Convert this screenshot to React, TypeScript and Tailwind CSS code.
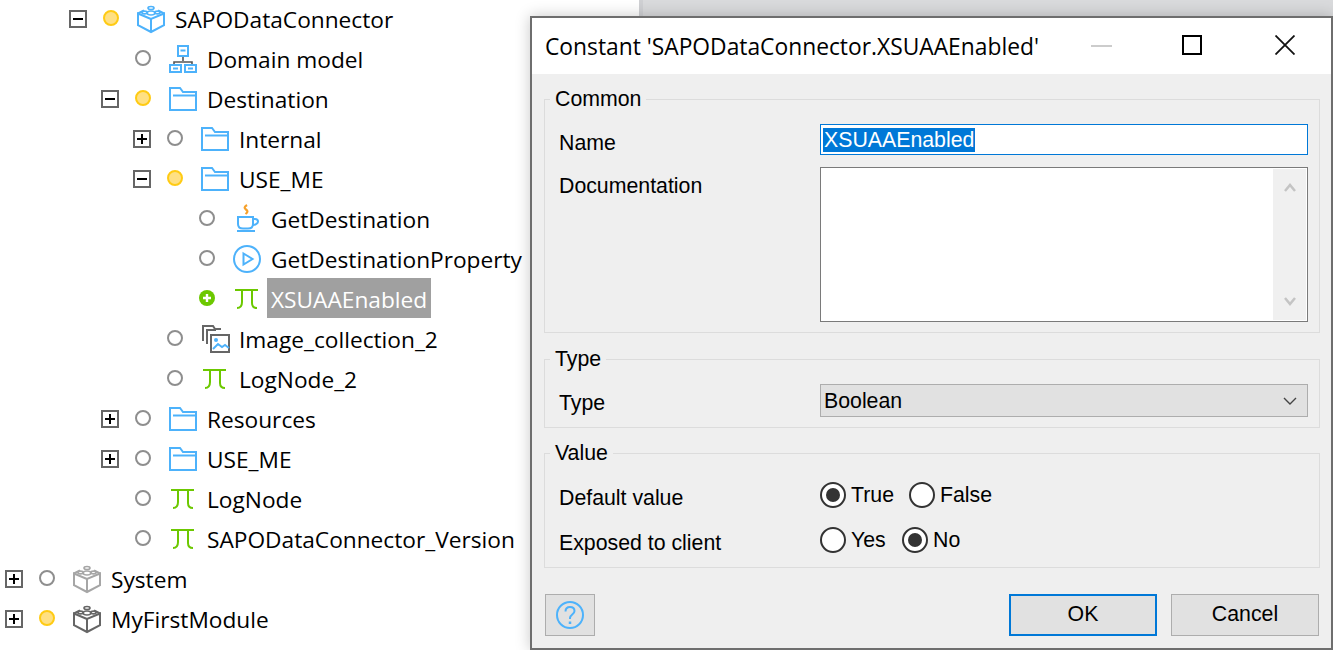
import React from 'react';

type DotKind = 'empty' | 'yellow' | 'added';
type IconKind = 'module' | 'moduleGray' | 'moduleDark' | 'domain' | 'folder' | 'java' | 'flow' | 'pi' | 'images';

interface TreeRow {
  level: number;
  toggle?: '+' | '-';
  dot: DotKind;
  icon: IconKind;
  label: string;
  selected?: boolean;
}

const rows: TreeRow[] = [
  { level: 2, toggle: '-', dot: 'yellow', icon: 'module', label: 'SAPODataConnector' },
  { level: 3, dot: 'empty', icon: 'domain', label: 'Domain model' },
  { level: 3, toggle: '-', dot: 'yellow', icon: 'folder', label: 'Destination' },
  { level: 4, toggle: '+', dot: 'empty', icon: 'folder', label: 'Internal' },
  { level: 4, toggle: '-', dot: 'yellow', icon: 'folder', label: 'USE_ME' },
  { level: 5, dot: 'empty', icon: 'java', label: 'GetDestination' },
  { level: 5, dot: 'empty', icon: 'flow', label: 'GetDestinationProperty' },
  { level: 5, dot: 'added', icon: 'pi', label: 'XSUAAEnabled', selected: true },
  { level: 4, dot: 'empty', icon: 'images', label: 'Image_collection_2' },
  { level: 4, dot: 'empty', icon: 'pi', label: 'LogNode_2' },
  { level: 3, toggle: '+', dot: 'empty', icon: 'folder', label: 'Resources' },
  { level: 3, toggle: '+', dot: 'empty', icon: 'folder', label: 'USE_ME' },
  { level: 3, dot: 'empty', icon: 'pi', label: 'LogNode' },
  { level: 3, dot: 'empty', icon: 'pi', label: 'SAPODataConnector_Version' },
  { level: 0, toggle: '+', dot: 'empty', icon: 'moduleGray', label: 'System' },
  { level: 0, toggle: '+', dot: 'yellow', icon: 'moduleDark', label: 'MyFirstModule' },
];

const Toggle = ({ kind }: { kind?: '+' | '-' }) => {
  if (!kind) return <span className="w-[18px] h-[18px] shrink-0" />;
  return (
    <svg width="18" height="18" viewBox="0 0 18 18" className="shrink-0 -mt-[3px]">
      <rect x="1" y="1" width="16" height="16" fill="#fff" stroke="#666" strokeWidth="2" />
      <path d={kind === '+' ? 'M4 9h10M9 4v10' : 'M4 9h10'} stroke="#000" strokeWidth="2" />
    </svg>
  );
};

const Dot = ({ kind }: { kind: DotKind }) => {
  if (kind === 'added') {
    return (
      <svg width="16" height="16" viewBox="0 0 16 16" className="shrink-0 ml-[16px] -mt-[4px]">
        <circle cx="8" cy="8" r="8" fill="#6cc800" />
        <path d="M4 8h8M8 4v8" stroke="#fff" strokeWidth="2.4" />
      </svg>
    );
  }
  const yellow = kind === 'yellow';
  return (
    <svg width="16" height="16" viewBox="0 0 16 16" className="shrink-0 ml-[16px] -mt-[4px]">
      <circle cx="8" cy="8" r="7" fill={yellow ? '#ffe083' : '#fff'} stroke={yellow ? '#ffcb14' : '#8e8e8e'} strokeWidth="2" />
    </svg>
  );
};

const ModuleIcon = ({ color }: { color: string }) => (
  <svg width="30" height="30" viewBox="0 0 30 30" fill="none" stroke={color} strokeWidth="1.6" className="shrink-0 -mt-[3px] mr-[2px]">
    <path d="M15 15 2 9.500v11.700L15 28l13-6.800V9.500z" strokeWidth="2" />
    <path d="M15 15v13" strokeWidth="2" />
    <path d="M2 9.500 8 6.500M22 6.500l6 3" strokeWidth="2" />
    <ellipse cx="15" cy="9" rx="3.800" ry="2" />
    <ellipse cx="8.500" cy="8.500" rx="2.600" ry="1.400" />
    <ellipse cx="21.500" cy="8.500" rx="2.600" ry="1.400" />
    <ellipse cx="15" cy="4" rx="3" ry="1.500" />
  </svg>
);

const TreeIcon = ({ kind }: { kind: IconKind }) => {
  switch (kind) {
    case 'module':
      return <ModuleIcon color="#4db2fb" />;
    case 'moduleGray':
      return <ModuleIcon color="#a6a6a6" />;
    case 'moduleDark':
      return <ModuleIcon color="#666" />;
    case 'domain':
      return (
        <svg width="30" height="30" viewBox="0 0 30 30" fill="none" className="shrink-0 -mt-[2px] mr-[2px]">
          <path d="M15 12v5M6 22v-4h18v4" stroke="#555" strokeWidth="1.600" />
          <path d="M10 2h10v10H10zM2 21h11v7H2zM17 21h11v7H17z" stroke="#4db2fb" strokeWidth="2" />
          <path d="M12.500 6.500h5M5 24.500h5M20 24.500h5" stroke="#4db2fb" strokeWidth="2" />
        </svg>
      );
    case 'folder':
      return (
        <svg width="30" height="26" viewBox="0 0 30 26" fill="none" stroke="#4db2fb" strokeWidth="2" className="shrink-0 -mt-[3px] mr-[2px]">
          <path d="M2 2h10l3 4h13v18H2z" />
          <path d="M5 9.500h23" />
        </svg>
      );
    case 'java':
      return (
        <svg width="30" height="32" viewBox="0 0 30 32" fill="none" className="shrink-0 -mt-[3px]">
          <path d="M14 2C11 4 11 5 13 6.500S15 9 12.500 11" stroke="#f6a12a" strokeWidth="2.200" />
          <path d="M5 14h15v7c0 3-2 4.500-5 4.500h-5c-3 0-5-1.500-5-4.500z" stroke="#4db2fb" strokeWidth="2" />
          <path d="M20 16h2c2 0 3 1 3 2.500s-2 3.500-5 3.500" stroke="#4db2fb" strokeWidth="2" />
          <path d="M4 28h18" stroke="#4db2fb" strokeWidth="2" />
        </svg>
      );
    case 'flow':
      return (
        <svg width="30" height="30" viewBox="0 0 30 30" fill="none" stroke="#4db2fb" strokeWidth="2" className="shrink-0 -mt-[3px] mr-[2px]">
          <circle cx="15" cy="15" r="13" />
          <path d="M11.500 9.500 20.500 15l-9 5.500z" />
        </svg>
      );
    case 'pi':
      return (
        <svg width="26" height="24" viewBox="0 0 26 24" fill="none" stroke="#6cc800" strokeWidth="2" className="shrink-0 -mt-[2px] mr-[3px]">
          <path d="M1 3h23M8 3v12c0 4-2 6-5 6M18 3v13c0 3 1.500 5 5 5" />
        </svg>
      );
    case 'images':
      return (
        <svg width="30" height="30" viewBox="0 0 30 30" fill="none" className="shrink-0 -mt-[3px]">
          <path d="M2 17V2h10l2 3h6M6 20V6h9" stroke="#666" strokeWidth="2" />
          <path d="M10 11h18v17H10z" stroke="#666" strokeWidth="2" />
          <path d="M12 25l5-5 4 3 3-2 4 3" stroke="#4db2fb" strokeWidth="2" />
          <circle cx="15" cy="16" r="2" fill="#4db2fb" />
        </svg>
      );
  }
};

const Tree = () => (
  <div className="w-[639px] shrink-0 bg-white">
    {rows.map((row, i) => (
      <div
        key={i}
        className="h-10 flex items-center pl-[5px]"
        style={{ marginLeft: row.level * 32 }}
      >
        <Toggle kind={row.toggle} />
        <Dot kind={row.dot} />
        <span className="w-[30px] h-[30px] ml-[18px] shrink-0 flex items-center justify-center">
          <TreeIcon kind={row.icon} />
        </span>
        <span
          className={
            row.selected
              ? 'ml-[4px] px-[4px] h-10 -mt-[4px] leading-[44px] bg-[#a0a0a0] text-white'
              : 'ml-[8px] leading-[42px] text-black'
          }
        >
          {row.label}
        </span>
      </div>
    ))}
  </div>
);

const Radio = ({ checked, label, labelClass }: { checked?: boolean; label: string; labelClass: string }) => (
  <label className="flex items-center h-[26px]">
    <span className="w-[26px] h-[26px] rounded-full border-2 border-[#333] bg-white flex items-center justify-center shrink-0">
      {checked && <span className="w-[14px] h-[14px] rounded-full bg-[#333]" />}
    </span>
    <span className={labelClass}>{label}</span>
  </label>
);

const Group = ({ title, className, children }: { title: string; className: string; children: React.ReactNode }) => (
  <fieldset className={`border border-[#dcdcdc] ${className}`}>
    <legend className="ml-[5px] px-[5px] h-6 leading-6 text-black">{title}</legend>
    {children}
  </fieldset>
);

const Dialog = () => (
  <div className="absolute left-[530px] top-[16px] w-[803px] h-[634px] border-2 border-[#6e6e6e] bg-[#efefef] flex flex-col font-['Liberation_Sans',sans-serif] text-[21.3px] text-black shadow-[0_0_14px_rgba(0,0,0,0.22)]">
    <div className="h-[56px] bg-white flex items-center shrink-0">
      <span className="ml-[13px] text-[22.8px] font-['Open_Sans',sans-serif] mt-[2px] whitespace-nowrap">
        Constant 'SAPODataConnector.XSUAAEnabled'
      </span>
      <svg width="21" height="2" className="ml-auto shrink-0">
        <rect width="21" height="2" fill="#ccc" />
      </svg>
      <svg width="20" height="20" className="ml-[70px] shrink-0 -mt-[2px]" fill="none">
        <rect x="1" y="1" width="18" height="18" stroke="#000" strokeWidth="2" />
      </svg>
      <svg width="20" height="20" className="ml-[73px] mr-[36px] shrink-0 -mt-[2px]" fill="none">
        <path d="M0.500 0.500 19.500 19.500M19.500 0.500 0.500 19.500" stroke="#111" strokeWidth="1.800" />
      </svg>
    </div>

    <div className="flex-1 pl-[12px] pr-[11px] pt-[13px] flex flex-col">
      <Group title="Common" className="pb-[10px]">
        <div className="flex pl-[14px] pr-[11px] pt-[13px]">
          <div className="w-[261px] shrink-0">
            <div className="h-[43px] pt-[7px] leading-6">Name</div>
            <div className="pt-[7px] leading-6">Documentation</div>
          </div>
          <div className="flex-1 flex flex-col gap-[12px]">
            <div className="h-[31px] bg-white border border-[#0078d7] flex items-center pl-[2px]">
              <span className="bg-[#0078d7] text-white h-[24px] leading-[24px] px-[1px]">XSUAAEnabled</span>
            </div>
            <div className="h-[155px] bg-white border border-[#7a7a7a] flex justify-end p-[1px]">
              <div className="w-[33px] bg-[#f0f0f0] flex flex-col justify-between items-center py-[14px]">
                <svg width="12" height="9" fill="none" stroke="#c4c4c4" strokeWidth="2.500">
                  <path d="M1 8l5-6 5 6" />
                </svg>
                <svg width="12" height="9" fill="none" stroke="#c4c4c4" strokeWidth="2.500">
                  <path d="M1 1l5 6 5-6" />
                </svg>
              </div>
            </div>
          </div>
        </div>
      </Group>

      <Group title="Type" className="mt-[14px] pb-[10px]">
        <div className="flex pl-[14px] pr-[11px] pt-[13px]">
          <div className="w-[261px] shrink-0 pt-[7px] leading-6">Type</div>
          <div className="flex-1 h-[33px] bg-[#e1e1e1] border border-[#adadad] flex items-center justify-between pl-[3px] pr-[10px]">
            <span className="leading-6">Boolean</span>
            <svg width="14" height="8" fill="none" stroke="#444" strokeWidth="1.400">
              <path d="M1 1l6 6 6-6" />
            </svg>
          </div>
        </div>
      </Group>

      <Group title="Value" className="mt-[13px] pb-[12px]">
        <div className="flex pl-[14px] pr-[11px] pt-[17px]">
          <div className="w-[261px] shrink-0 flex flex-col gap-[21px] pt-[4px]">
            <div className="leading-6">Default value</div>
            <div className="leading-6">Exposed to client</div>
          </div>
          <div className="flex flex-col gap-[19px]">
            <div className="flex gap-[12px]">
              <Radio checked label="True" labelClass="ml-[5px] leading-6 w-[46px]" />
              <Radio label="False" labelClass="ml-[5px] leading-6" />
            </div>
            <div className="flex gap-[14px]">
              <Radio label="Yes" labelClass="ml-[5px] leading-6 w-[37px]" />
              <Radio checked label="No" labelClass="ml-[5px] leading-6" />
            </div>
          </div>
        </div>
      </Group>

      <div className="mt-[26px] flex items-start pl-[1px] pr-[1px]">
        <button className="w-[50px] h-[42px] bg-[#e1e1e1] border border-[#adadad] flex items-center justify-center">
          <svg width="30" height="30" viewBox="0 0 30 30" fill="none" stroke="#4db2fb" strokeWidth="2">
            <circle cx="15" cy="15" r="13" />
            <path d="M10.500 11.500c0-3 2-4.500 4.500-4.500s4.500 1.500 4.500 4c0 3.500-4.500 3.500-4.500 7v1" />
            <path d="M15 21.500v2.500" strokeWidth="2.500" />
          </svg>
        </button>
        <button className="ml-auto w-[148px] h-[42px] pb-[1px] bg-[#e1e1e1] border-2 border-[#0078d7] text-center">OK</button>
        <button className="ml-[14px] w-[148px] h-[42px] pb-[1px] bg-[#e1e1e1] border border-[#adadad] text-center">Cancel</button>
      </div>
    </div>
  </div>
);

export default function App() {
  return (
    <div className="relative w-[1333px] h-[650px] overflow-hidden flex bg-[#d9dadc] font-['Open_Sans',sans-serif] text-[22.7px]">
      <Tree />
      <div className="w-[4px] bg-[#cfd0d3]" />
      <Dialog />
    </div>
  );
}
